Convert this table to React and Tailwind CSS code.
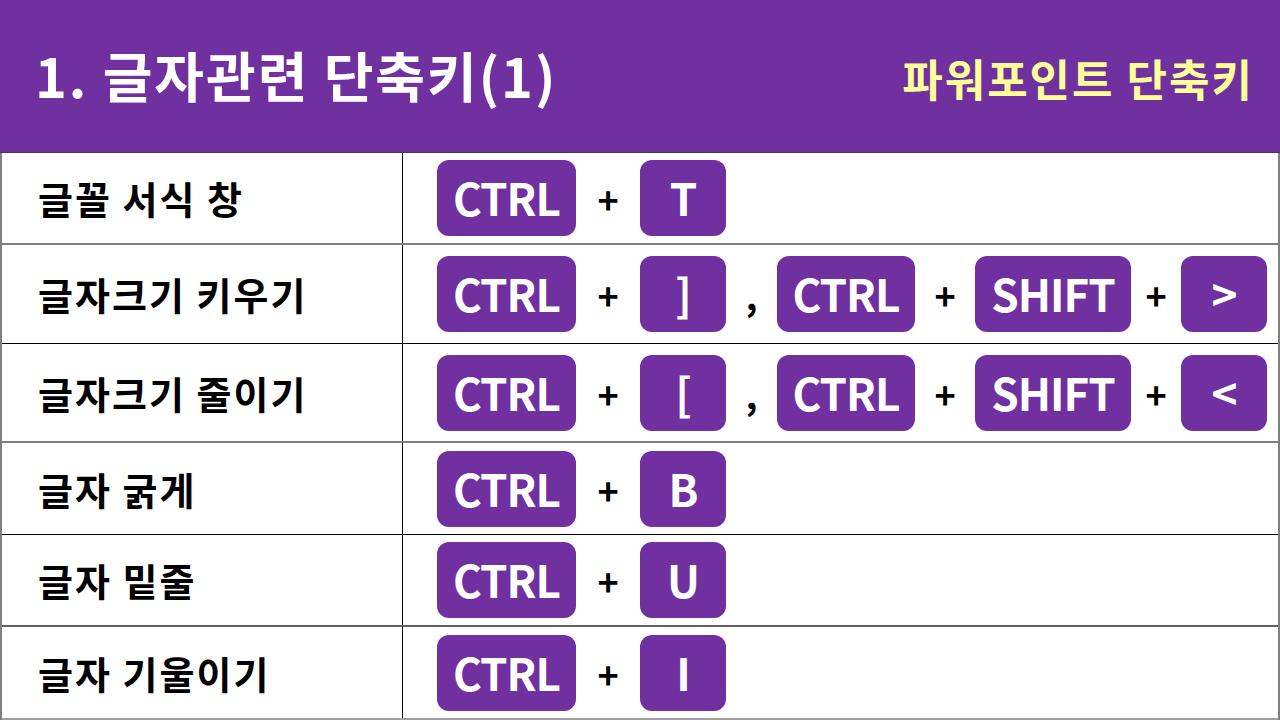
import React from "react";

const font = { fontFamily: '"Noto Sans CJK KR", "Noto Sans", sans-serif' };

function Key({ w, children }) {
  return (
    <div
      className="h-[76px] rounded-[12px] bg-[#7030a0] text-white font-bold flex items-center justify-center text-[44px] tracking-[-1px] leading-none"
      style={{ width: w }}
    >
      <span className="-mt-[2px]">{children}</span>
    </div>
  );
}

function Sep({ w, children }) {
  return (
    <div
      className="flex items-center justify-center text-[36px] font-bold text-black leading-none"
      style={{ width: w }}
    >
      {children}
    </div>
  );
}

const rows = [
  {
    label: "글꼴 서식 창",
    h: "h-[92px]",
    border: "border-b-2 border-[#808080]",
    keys: [
      ["k", 139, "CTRL"],
      ["s", 64, "+"],
      ["k", 86, "T"],
    ],
  },
  {
    label: "글자크기 키우기",
    h: "h-[99px]",
    border: "border-b border-black",
    keys: [
      ["k", 139, "CTRL"],
      ["s", 64, "+"],
      ["k", 86, "]"],
      ["s", 51, ","],
      ["k", 138, "CTRL"],
      ["s", 60, "+"],
      ["k", 156, "SHIFT"],
      ["s", 50, "+"],
      ["k", 86, ">"],
    ],
  },
  {
    label: "글자크기 줄이기",
    h: "h-[99px]",
    border: "border-b-2 border-[#808080]",
    keys: [
      ["k", 139, "CTRL"],
      ["s", 64, "+"],
      ["k", 86, "["],
      ["s", 51, ","],
      ["k", 138, "CTRL"],
      ["s", 60, "+"],
      ["k", 156, "SHIFT"],
      ["s", 50, "+"],
      ["k", 86, "<"],
    ],
  },
  {
    label: "글자 굵게",
    h: "h-[92px]",
    border: "border-b border-black",
    keys: [
      ["k", 139, "CTRL"],
      ["s", 64, "+"],
      ["k", 86, "B"],
    ],
  },
  {
    label: "글자 밑줄",
    h: "h-[92px]",
    border: "border-b-2 border-[#606060]",
    keys: [
      ["k", 139, "CTRL"],
      ["s", 64, "+"],
      ["k", 86, "U"],
    ],
  },
  {
    label: "글자 기울이기",
    h: "h-[93px]",
    border: "border-b-2 border-[#a0a0a0]",
    keys: [
      ["k", 139, "CTRL"],
      ["s", 64, "+"],
      ["k", 86, "I"],
    ],
  },
];

export default function App() {
  return (
    <div className="w-[1280px] h-[720px] bg-white overflow-hidden flex flex-col" style={font}>
      <div className="h-[153px] bg-[#7030a0] border-b border-[#404040] flex items-center justify-between pl-[35px] pr-[26px] shrink-0">
        <div className="text-white font-bold text-[54px] tracking-[2px] leading-none -mt-[2px]">
          1. 글자관련 단축키(1)
        </div>
        <div className="text-[#ffff99] font-bold text-[44px] tracking-[2px] leading-none mt-[4px]">
          파워포인트 단축키
        </div>
      </div>
      <div className="flex flex-col border-l-2 border-r-2 border-[#808080]">
        {rows.map((r, i) => (
          <div key={i} className={`flex ${r.h} ${r.border} shrink-0`}>
            <div className="w-[401px] border-r border-black flex items-center pl-[36px] text-[38px] tracking-[2px] font-bold text-black leading-none">
              {r.label}
            </div>
            <div className="flex items-center pl-[34px]">
              {r.keys.map(([t, w, c], j) =>
                t === "k" ? (
                  <Key key={j} w={w}>
                    {c}
                  </Key>
                ) : (
                  <Sep key={j} w={w}>
                    {c}
                  </Sep>
                )
              )}
            </div>
          </div>
        ))}
      </div>
    </div>
  );
}
